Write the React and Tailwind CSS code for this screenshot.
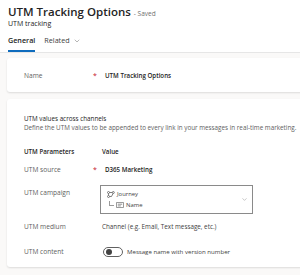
import { ChevronDown } from 'lucide-react';

const font = { fontFamily: '"Open Sans", "Liberation Sans", sans-serif' };

function JourneyIcon() {
    return (
        <svg width="8" height="7" viewBox="0 0 8 7" fill="none" stroke="#616161" strokeWidth="0.8">
            <circle cx="1.5" cy="1.5" r="1" />
            <circle cx="6.3" cy="1.5" r="1" />
            <circle cx="1.5" cy="5.5" r="1" />
            <path d="M2.5 1.5h2.8M1.5 2.5v2M2.5 5.5h2l1.5-3" />
        </svg>
    );
}

function NameIcon() {
    return (
        <svg width="8" height="6" viewBox="0 0 8 6" fill="none" stroke="#616161" strokeWidth="0.7">
            <rect x="0.4" y="0.4" width="7.2" height="5.2" rx="0.5" />
            <path d="M1.8 2.2h4.4M1.8 3.9h3" />
        </svg>
    );
}

function Row({ label, required, children, className = '', labelClass = '' }) {
    return (
        <div className={`flex ${className}`}>
            <div className={`w-[69px] shrink-0 text-[6.6px] leading-[9px] text-[#616161] ${labelClass}`}>{label}</div>
            <div className="w-[8px] shrink-0 text-[7px] leading-[9px] text-[#c50f1f]">{required ? '*' : ''}</div>
            <div className="flex-1 text-[6.2px] leading-[9px]">{children}</div>
        </div>
    );
}

export default function App() {
    return (
        <div style={font} className="h-[275px] w-[300px] overflow-hidden bg-[#faf9f8]">
            <div className="w-[340px] bg-white px-2 pt-[5px]">
                <div className="flex h-[14px] items-baseline gap-[3px]">
                    <h1 className="text-[11.5px] font-semibold leading-[14px] text-[#242424]">UTM Tracking Options</h1>
                    <span className="text-[6.5px] text-[#707070]">- Saved</span>
                </div>
                <div className="text-[7px] leading-[9px] text-[#242424]">UTM tracking</div>
                <div className="mt-[8px] flex gap-[9px] text-[7.2px] leading-[9px]">
                    <div className="border-b-2 border-[#0f6cbd] pb-[5px] font-semibold text-[#242424]">General</div>
                    <div className="flex items-start gap-[3px] text-[#424242]">
                        Related <ChevronDown size={8} strokeWidth={1.4} className="mt-[1px] text-[#616161]" />
                    </div>
                </div>
            </div>
            <div className="w-[340px] border-t border-[#e6e6e6]" />

            <div className="w-[340px] px-[7px] pt-[5px]">
                <div className="flex h-[34px] items-center rounded-[3px] bg-white pl-[17px] shadow-[0_1px_2px_rgba(0,0,0,0.12)]">
                    <Row label="Name" required className="w-full items-center">
                        <span className="ml-[4px] font-semibold text-[#242424]">UTM Tracking Options</span>
                    </Row>
                </div>

                <div className="mt-[7px] h-[168px] rounded-[3px] bg-white pl-[17px] pt-[14.5px] shadow-[0_1px_2px_rgba(0,0,0,0.12)]">
                    <div className="text-[6.3px] leading-[9px] text-[#242424]">UTM values across channels</div>
                    <div className="whitespace-nowrap text-[6.3px] leading-[9px] text-[#616161]">
                        Define the UTM values to be appended to every link in your messages in real-time marketing.
                    </div>

                    <div className="mt-[15px] flex text-[6.2px] leading-[9px] font-semibold text-[#242424]">
                        <div className="w-[78px]">UTM Parameters</div>
                        <div>Value</div>
                    </div>

                    <Row label="UTM source" required className="mt-[9px] items-center">
                        <span className="ml-[4px] font-semibold text-[#242424]">D365 Marketing</span>
                    </Row>

                    <Row label="UTM campaign" className="mt-[11.5px] items-start" labelClass="mt-[2.5px]">
                        <div className="-ml-[1px] flex h-[29px] w-[153px] items-center border border-[#8a8a8a] pl-[6px] pr-[4px]">
                            <div className="flex-1 text-[5.9px] leading-[11px] text-[#424242]">
                                <div className="flex items-center gap-[2px]">
                                    <JourneyIcon /> Journey
                                </div>
                                <div className="flex items-center gap-[2px] pl-[2px]">
                                    <span className="mb-[3px] h-[5px] w-[5px] border-b border-l border-[#9a9a9a]" />
                                    <NameIcon /> Name
                                </div>
                            </div>
                            <ChevronDown size={7} strokeWidth={1.2} className="text-[#616161]" />
                        </div>
                    </Row>

                    <Row label="UTM medium" className="mt-[7.5px] items-center">
                        <span className="ml-[1px] text-[6.3px] text-[#424242]">Channel (e.g. Email, Text message, etc.)</span>
                    </Row>

                    <Row label="UTM content" className="mt-[16px] h-[10px] items-center">
                        <div className="ml-[2px] flex items-center gap-[4px]">
                            <span className="flex h-[10px] w-[20px] items-center rounded-full border border-[#616161] px-[2px]">
                                <span className="h-[6px] w-[6px] rounded-full bg-[#424242]" />
                            </span>
                            <span className="text-[6.1px] text-[#424242]">Message name with version number</span>
                        </div>
                    </Row>
                </div>
            </div>
        </div>
    );
}
